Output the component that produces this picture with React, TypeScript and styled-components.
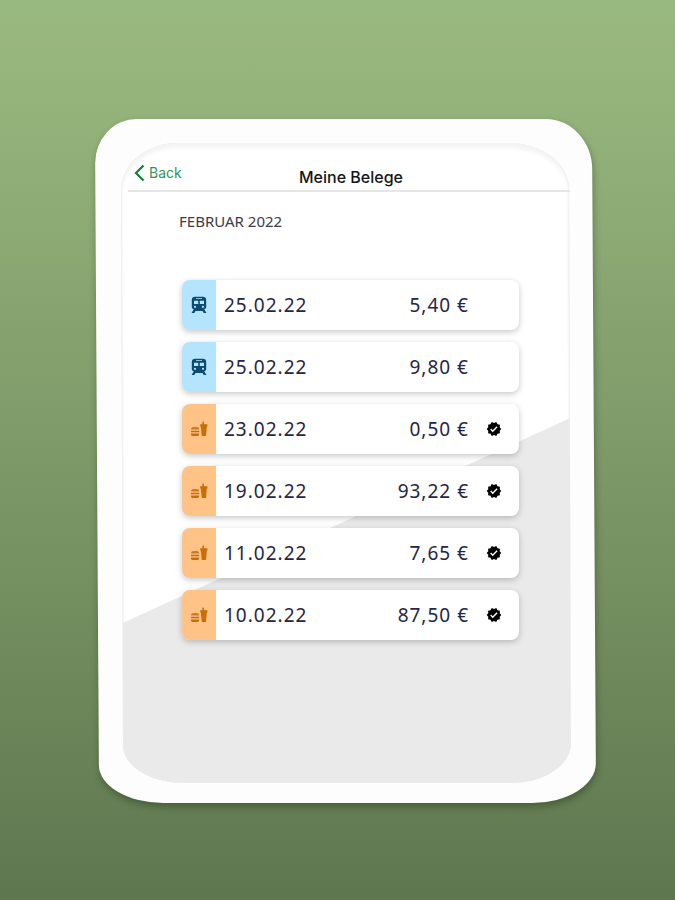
import React from "react";
import styled, { createGlobalStyle } from "styled-components";
import { MdVerified } from "react-icons/md";

const GlobalStyle = createGlobalStyle`
  *, *::before, *::after { box-sizing: border-box; }
  body { margin: 0; }
`;

const Page = styled.div`
  display: flex;
  min-height: 100vh;
  padding: 119px 81px 97px 97px;
  background: linear-gradient(#98b980, #93b27a 14%, #5f774f);
  font-family: "Noto Sans", sans-serif;
`;

const Device = styled.div`
  position: relative;
  isolation: isolate;
  display: flex;
  flex: 1;
  min-width: 0;
  padding: 24px 24px 20px 25px;

  &::before {
    content: "";
    position: absolute;
    inset: 0;
    z-index: -1;
    border-radius: 42px 46px 64px 64px / 44px 50px 40px 38px;
    background: #fdfdfd;
    box-shadow: 1px 4px 7px rgba(30, 50, 20, 0.4);
    transform: skewX(0.35deg);
  }
`;

const Screen = styled.main`
  position: relative;
  isolation: isolate;
  flex: 1;
  min-width: 0;
`;

const Backdrop = styled.div`
  position: absolute;
  inset: 0;
  z-index: -1;
  overflow: hidden;
  border-radius: 56px 60px 60px 60px / 48px 46px 40px 38px;
  background: #ffffff;
  box-shadow: inset 0 5px 4px #f4f4f4, inset 0 0 2px #c8c8c8;
  transform: skewX(0.2deg);

  &::after {
    content: "";
    position: absolute;
    inset: 0;
    background: #eaeaea;
    clip-path: polygon(0 75%, 100% 43%, 100% 100%, 0 100%);
  }
`;

const Header = styled.header`
  display: grid;
  grid-template-columns: 1fr auto 1fr;
  height: 49px;
  margin: 0 0 0 6px;
  padding: 20px 0 0 4px;
  border-bottom: 2px solid #e6e6e6;
  font-family: Inter, sans-serif;
`;

const BackButton = styled.button`
  display: flex;
  align-items: center;
  justify-self: start;
  gap: 4px;
  height: 20px;
  padding: 0 0 0 2px;
  border: 0;
  background: none;
  color: #2f9560;
  font: 14px/20px Inter, sans-serif;
  cursor: pointer;
`;

const Title = styled.h1`
  margin: 4px 0 0;
  color: #151515;
  font-size: 16px;
  font-weight: 500;
  line-height: 20px;
`;

const Content = styled.section`
  padding: 19px 51px 0 57px;
`;

const Month = styled.h2`
  margin: 0;
  color: #3b3c4c;
  font-size: 15px;
  font-weight: 400;
  line-height: 20px;
`;

const Receipts = styled.ul`
  display: flex;
  flex-direction: column;
  gap: 12px;
  margin: 49px 0 0;
  padding: 0 0 0 3px;
  list-style: none;
`;

const Receipt = styled.li`
  display: grid;
  grid-template-columns: 34px 1fr auto 50px;
  align-items: center;
  height: 50px;
  overflow: hidden;
  border-radius: 8px;
  background: #ffffff;
  box-shadow: 0 2px 6px rgba(0, 0, 0, 0.22);
  color: #25264a;
  font-size: 19px;
  letter-spacing: 1px;
`;

const Category = styled.span<{ $kind: Kind }>`
  display: grid;
  place-items: center;
  align-self: stretch;
  background: ${(p) => (p.$kind === "train" ? "#b5e4ff" : "#ffc388")};
  color: ${(p) => (p.$kind === "train" ? "#0c4a70" : "#c66f08")};
`;

const DateText = styled.time`
  padding-left: 8px;
`;

const Status = styled.span`
  display: grid;
  place-items: center;
  color: #000000;
`;

type Kind = "train" | "food";

const TrainIcon = () => (
  <svg width="16" height="18" viewBox="0 0 16 18" role="img" aria-label="Bahn">
    <path
      fill="currentColor"
      fillRule="evenodd"
      d="M4 .8h8c1.900 0 3.200 1 3.200 3v7c0 1.400-.8 2.200-2 2.500l2.200 3.700h-2.700l-1.200-1.900h-7L3.300 17H.6l2.200-3.700c-1.200-.3-2-1.100-2-2.500v-7c0-2 1.300-3 3.200-3Zm1 1.400v.9h6v-.9H5ZM3 4.800v3.200h4.200V4.800H3Zm5.800 0v3.200H13V4.800H8.800ZM4 9.700a1.100 1.100 0 1 0 0 2.200 1.100 1.100 0 0 0 0-2.200Zm8 0a1.100 1.100 0 1 0 0 2.200 1.100 1.100 0 0 0 0-2.200Z"
    />
  </svg>
);

const FoodIcon = () => (
  <svg width="18" height="18" viewBox="0 0 18 18" role="img" aria-label="Verpflegung">
    <g fill="currentColor">
      <path d="M1 9.500C1 7.800 2.200 7 4 7h2.500c1.800 0 2.700.8 2.700 2.500H1Z" opacity=".85" />
      <path d="M1 10.700h8.200v1.500H1zM1 13.500h8.200v.7c0 1.200-.7 1.800-1.800 1.800H2.700C1.700 16 1 15.400 1 14.200v-.7Z" />
      <path d="M10.200 4.300h2.300L12.200 2l1.400-.7.500 3h3.300v2.300h-.6L16 16h-4.200l-1-9.400h-.6V4.300Z" />
    </g>
  </svg>
);

const receipts: { kind: Kind; date: string; amount: string; verified: boolean }[] = [
  { kind: "train", date: "25.02.22", amount: "5,40 €", verified: false },
  { kind: "train", date: "25.02.22", amount: "9,80 €", verified: false },
  { kind: "food", date: "23.02.22", amount: "0,50 €", verified: true },
  { kind: "food", date: "19.02.22", amount: "93,22 €", verified: true },
  { kind: "food", date: "11.02.22", amount: "7,65 €", verified: true },
  { kind: "food", date: "10.02.22", amount: "87,50 €", verified: true },
];

export default function App() {
  return (
    <>
      <GlobalStyle />
      <Page>
        <Device>
          <Screen>
            <Backdrop />
            <Header>
              <BackButton type="button">
                <svg width="11" height="18" viewBox="0 0 11 18" aria-hidden="true">
                  <path d="M9.500 1.500 2 9l7.500 7.500" fill="none" stroke="#128036" strokeWidth="2.200" />
                </svg>
                Back
              </BackButton>
              <Title>Meine Belege</Title>
            </Header>
            <Content>
              <Month>FEBRUAR 2022</Month>
              <Receipts>
                {receipts.map((r, i) => (
                  <Receipt key={i}>
                    <Category $kind={r.kind}>
                      {r.kind === "train" ? <TrainIcon /> : <FoodIcon />}
                    </Category>
                    <DateText>{r.date}</DateText>
                    <span>{r.amount}</span>
                    <Status>{r.verified && <MdVerified size={16} title="Geprüft" />}</Status>
                  </Receipt>
                ))}
              </Receipts>
            </Content>
          </Screen>
        </Device>
      </Page>
    </>
  );
}
